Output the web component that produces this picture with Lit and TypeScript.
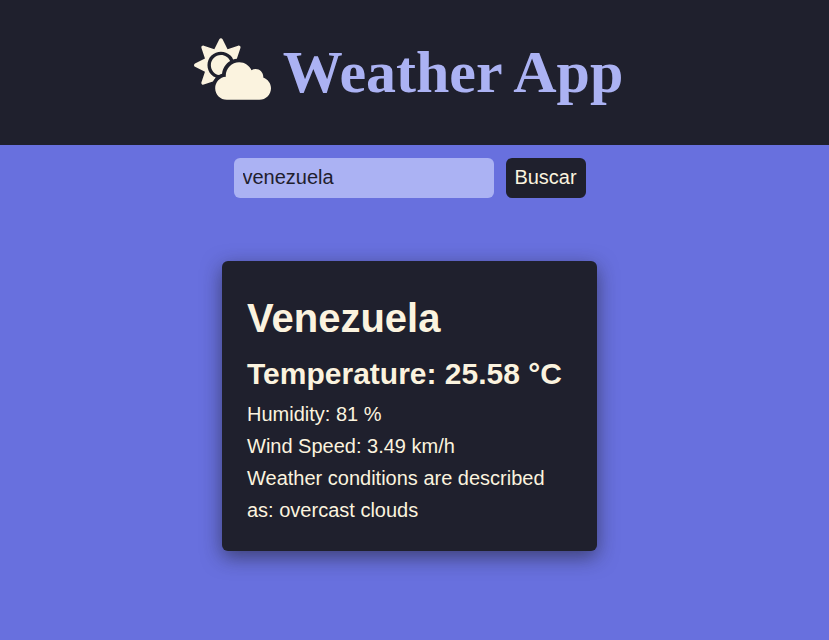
import { LitElement, html, css } from "lit";
import { customElement, state } from "lit/decorators.js";

interface Weather {
  city: string;
  temperature: number;
  humidity: number;
  wind: number;
  description: string;
}

@customElement("weather-card")
export class WeatherCard extends LitElement {
  static properties = { data: { attribute: false } };

  declare data: Weather;

  static styles = css`
    :host {
      display: block;
      box-sizing: border-box;
      width: 100%;
      max-width: 375px;
      padding: 25px;
      border-radius: 6px;
      background: #1f202d;
      color: #fbf3df;
      box-shadow: 0 6px 20px rgba(31, 32, 45, 0.6);
    }
    h2,
    h3,
    p {
      margin: 0;
      line-height: 32px;
      font-size: 20px;
    }
    h2 {
      font-size: 40px;
      line-height: 64px;
    }
    h3 {
      font-size: 30px;
      line-height: 48px;
    }
  `;

  render() {
    const d = this.data;
    return html`
      <h2>${d.city}</h2>
      <h3>${`Temperature: ${d.temperature} °C`}</h3>
      <p>${`Humidity: ${d.humidity} %`}</p>
      <p>${`Wind Speed: ${d.wind} km/h`}</p>
      <p>${`Weather conditions are described as: ${d.description}`}</p>
    `;
  }
}

@customElement("app-root")
export class AppRoot extends LitElement {
  @state() private query = "venezuela";

  @state() private weather: Weather = {
    city: "Venezuela",
    temperature: 25.58,
    humidity: 81,
    wind: 3.49,
    description: "overcast clouds",
  };

  static styles = css`
    :host {
      display: block;
      min-height: 100vh;
      background: #6870de;
      font-family: "Liberation Sans", Arial, sans-serif;
      font-size: 20px;
    }
    header {
      display: flex;
      align-items: center;
      justify-content: center;
      gap: 12px;
      padding: 24px 12px 25px 0;
      background: #1f202d;
    }
    .logo {
      flex: none;
      width: 77px;
      height: 62px;
      fill: #fbf3df;
      margin-bottom: 6px;
    }
    h1 {
      margin: 0;
      color: #abb2f3;
      font-family: "Liberation Serif", "Times New Roman", serif;
      font-size: 60px;
      line-height: 96px;
    }
    main {
      display: flex;
      flex-direction: column;
      align-items: center;
      gap: 63px;
      padding: 13px 10px 24px 0;
    }
    form {
      display: flex;
      gap: 12px;
    }
    input,
    button {
      box-sizing: border-box;
      height: 40px;
      border: 0;
      border-radius: 6px;
      font: inherit;
    }
    input {
      width: 260px;
      padding: 0 9px 2px;
      background: #abb2f3;
      color: #1f202d;
    }
    button {
      width: 80px;
      padding: 0 0 2px;
      background: #1f202d;
      color: #fbf3df;
      cursor: pointer;
    }
  `;

  private onInput(e: Event) {
    this.query = (e.target as HTMLInputElement).value;
  }

  private onSubmit(e: Event) {
    e.preventDefault();
    const q = this.query.trim();
    if (q) {
      this.weather = { ...this.weather, city: q[0].toUpperCase() + q.slice(1) };
    }
  }

  render() {
    return html`
      <header>
        <svg class="logo" viewBox="0 0 640 512" aria-hidden="true">
          <path
            d="M575.2 325.7c.2-1.9.8-3.7.8-5.6 0-35.3-28.7-64-64-64-12.6 0-24.2 3.8-34.1 10-17.6-38.8-56.5-66-101.9-66-61.8 0-112 50.1-112 112 0 3 .7 5.8.9 8.7-49.6 3.7-88.9 44.7-88.9 95.3 0 53 43 96 96 96h272c53 0 96-43 96-96 0-42.1-27.2-77.4-64.8-90.4zm-430.4-22.6c-43.7-43.7-43.7-114.7 0-158.3 43.7-43.7 114.7-43.7 158.4 0 9.7 9.7 16.9 20.9 22.3 32.7 9.8-3.7 20.1-6 30.7-7.5L386 81.1c4-11.9-7.3-23.1-19.2-19.2L279 91.2 237.5 8.4C232-2.8 216-2.8 210.4 8.4L169 91.2 81.1 61.9C69.3 58 58 69.3 61.9 81.1l29.3 87.8-82.8 41.5c-11.2 5.6-11.2 21.5 0 27.1l82.8 41.4-29.3 87.8c-4 11.9 7.3 23.1 19.2 19.1l76.1-25.3c6.1-12.4 14-23.7 23.6-33.5-13.1-5.4-25.4-13.4-36-24zm-4.8-79.2c0 40.8 29.3 74.8 67.9 82.3 8-4.7 16.3-8.8 25.2-11.7 5.4-44.3 31-82.5 67.4-105C287.3 160.4 258 140 224 140c-46.3 0-84 37.6-84 83.9z"
          />
        </svg>
        <h1>Weather App</h1>
      </header>
      <main>
        <form @submit=${this.onSubmit}>
          <input
            type="text"
            aria-label="Ciudad"
            .value=${this.query}
            @input=${this.onInput}
          />
          <button type="submit">Buscar</button>
        </form>
        <weather-card .data=${this.weather}></weather-card>
      </main>
    `;
  }
}
